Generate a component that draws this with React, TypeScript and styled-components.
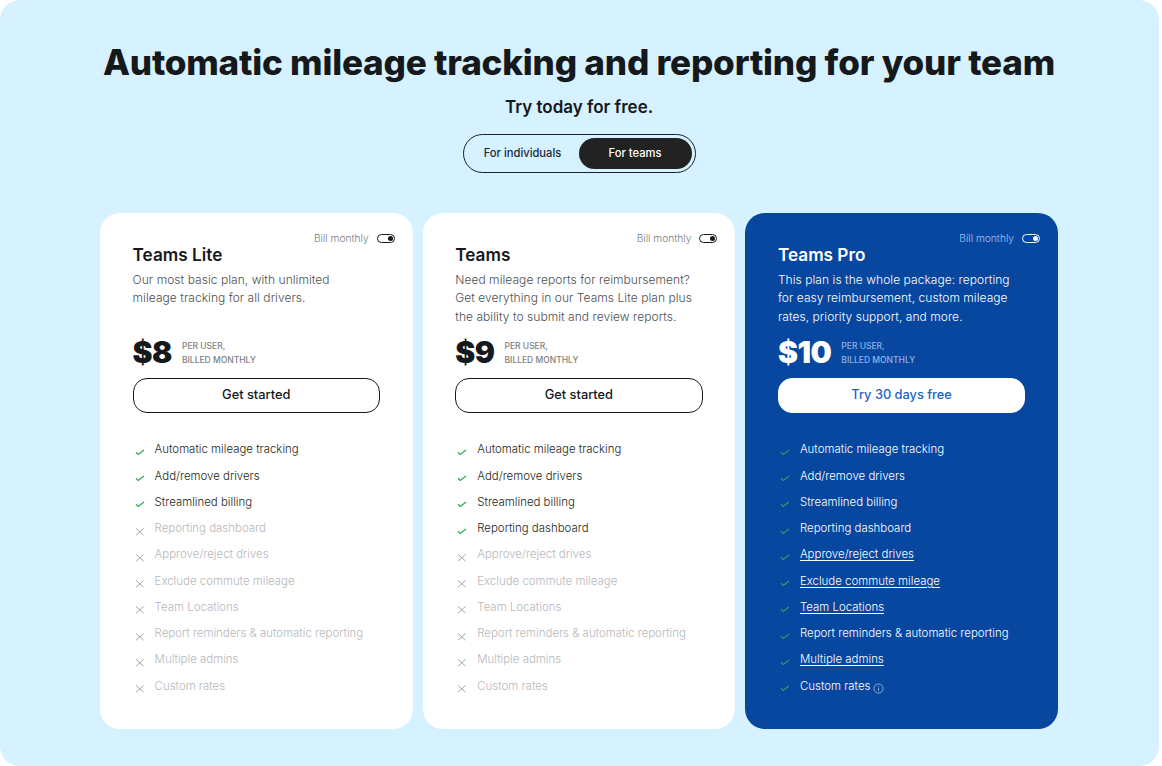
import React from 'react';
import styled, { createGlobalStyle } from 'styled-components';

const features = [
  'Automatic mileage tracking',
  'Add/remove drivers',
  'Streamlined billing',
  'Reporting dashboard',
  'Approve/reject drives',
  'Exclude commute mileage',
  'Team Locations',
  'Report reminders & automatic reporting',
  'Multiple admins',
  'Custom rates',
];

const linked = ['Approve/reject drives', 'Exclude commute mileage', 'Team Locations', 'Multiple admins'];

const plans = [
  {
    name: 'Teams Lite',
    description: 'Our most basic plan, with unlimited mileage tracking for all drivers.',
    price: '$8',
    cta: 'Get started',
    included: 3,
    pro: false,
  },
  {
    name: 'Teams',
    description: 'Need mileage reports for reimbursement? Get everything in our Teams Lite plan plus the ability to submit and review reports.',
    price: '$9',
    cta: 'Get started',
    included: 4,
    pro: false,
  },
  {
    name: 'Teams Pro',
    description: 'This plan is the whole package: reporting for easy reimbursement, custom mileage rates, priority support, and more.',
    price: '$10',
    cta: 'Try 30 days free',
    included: 10,
    pro: true,
  },
];

const App: React.FC = () => {
  return (
    <>
      <GlobalStyle />
      <Panel>
        <Heading>Automatic mileage tracking and reporting for your team</Heading>
        <Subheading>Try today for free.</Subheading>
        <Switcher>
          <SwitchOption>For individuals</SwitchOption>
          <SwitchOption $active>For teams</SwitchOption>
        </Switcher>
        <Cards>
          {plans.map((plan) => (
            <Card key={plan.name} $pro={plan.pro}>
              <BillRow $pro={plan.pro}>
                Bill monthly
                <Toggle $pro={plan.pro} />
              </BillRow>
              <PlanName>{plan.name}</PlanName>
              <Description $pro={plan.pro}>{plan.description}</Description>
              <PriceRow>
                <Price>{plan.price}</Price>
                <PriceNote $pro={plan.pro}>
                  Per user,
                  <br />
                  billed monthly
                </PriceNote>
              </PriceRow>
              <Cta $pro={plan.pro}>{plan.cta}</Cta>
              <FeatureList>
                {features.map((feature, i) => {
                  const on = i < plan.included;
                  return (
                    <Feature key={feature} $on={on} $pro={plan.pro}>
                      {on ? <CheckIcon $pro={plan.pro} /> : <CrossIcon />}
                      <FeatureText $link={plan.pro && linked.includes(feature)}>{feature}</FeatureText>
                      {plan.pro && feature === 'Custom rates' && <InfoIcon />}
                    </Feature>
                  );
                })}
              </FeatureList>
            </Card>
          ))}
        </Cards>
      </Panel>
    </>
  );
};

const CheckIcon: React.FC<{ $pro: boolean }> = ({ $pro }) => (
  <Mark viewBox="0 0 12 12" fill="none" stroke={$pro ? '#2f9e62' : '#27a75c'} strokeWidth="1.2">
    <path d="M3 7.3 5.2 9.4 11 5" />
  </Mark>
);

const CrossIcon: React.FC = () => (
  <Mark viewBox="0 0 12 12" fill="none" stroke="#a3a7aa" strokeWidth="1">
    <path d="M3 4.4 10.6 11.2M10.6 4.4 3 11.2" />
  </Mark>
);

const InfoIcon: React.FC = () => (
  <Info viewBox="0 0 12 12" fill="none" stroke="#b4d0f2" strokeWidth="0.8">
    <circle cx="6" cy="6" r="5" />
    <path d="M6 5.2V9M6 3.2V4.2" />
  </Info>
);

const GlobalStyle = createGlobalStyle`
  html, body {
    margin: 0;
    padding: 0;
    background: #fff;
  }
  body {
    font-family: Inter, "Liberation Sans", sans-serif;
    color: #16191c;
  }
`;

const Panel = styled.div`
  box-sizing: border-box;
  width: 1159px;
  height: 766px;
  padding: 40px 1px 0 0;
  background: #d6f1ff;
  border-radius: 20px;
  display: flex;
  flex-direction: column;
  align-items: center;
`;

const Heading = styled.h1`
  margin: 0;
  font-size: 35.1px;
  line-height: 44px;
  font-weight: 800;
  letter-spacing: -0.2px;
  white-space: nowrap;
  color: #16191c;
`;

const Subheading = styled.p`
  margin: 11px 0 0;
  font-size: 17px;
  line-height: 24px;
  font-weight: 600;
`;

const Switcher = styled.div`
  box-sizing: border-box;
  width: 233px;
  height: 39px;
  margin-top: 15px;
  padding: 3px;
  border: 1px solid #16232e;
  border-radius: 20px;
  display: grid;
  grid-template-columns: 112px 1fr;
`;

const SwitchOption = styled.div<{ $active?: boolean }>`
  display: flex;
  align-items: center;
  justify-content: center;
  padding-bottom: 2px;
  border-radius: 16px;
  font-size: 11.2px;
  font-weight: 500;
  color: ${(props) => (props.$active ? '#fff' : '#1d2a3a')};
  background: ${(props) => (props.$active ? '#222' : 'transparent')};
`;

const Cards = styled.div`
  width: 958px;
  margin-top: 40px;
  display: grid;
  grid-template-columns: repeat(3, 1fr);
  gap: 10px;
`;

const Card = styled.section<{ $pro: boolean }>`
  box-sizing: border-box;
  height: 516px;
  padding: 18px 18px 0 32.6px;
  border-radius: 20px;
  background: ${(props) => (props.$pro ? '#07479f' : '#fff')};
  color: ${(props) => (props.$pro ? '#fff' : '#16191c')};
`;

const BillRow = styled.div<{ $pro: boolean }>`
  height: 14px;
  display: flex;
  align-items: center;
  justify-content: flex-end;
  gap: 8px;
  font-size: 10.2px;
  font-weight: 300;
  color: ${(props) => (props.$pro ? '#a5c4ee' : '#77797c')};
`;

const Toggle = styled.span<{ $pro: boolean }>`
  box-sizing: border-box;
  position: relative;
  width: 18px;
  height: 9px;
  border: 1px solid ${(props) => (props.$pro ? '#fff' : '#16191c')};
  border-radius: 5px;

  &::after {
    content: '';
    position: absolute;
    top: 1px;
    right: 1px;
    width: 5px;
    height: 5px;
    border-radius: 50%;
    background: ${(props) => (props.$pro ? '#fff' : '#16191c')};
  }
`;

const PlanName = styled.h2`
  margin: 0;
  font-size: 17.2px;
  line-height: 20px;
  font-weight: 600;
`;

const Description = styled.p<{ $pro: boolean }>`
  box-sizing: border-box;
  width: 242px;
  height: 54px;
  margin: 6px 0 0;
  font-size: 12px;
  line-height: 18.3px;
  font-weight: 300;
  letter-spacing: 0.05px;
  color: ${(props) => (props.$pro ? '#fff' : '#4c4f52')};
`;

const PriceRow = styled.div`
  height: 36px;
  margin-top: 9px;
  display: flex;
  align-items: center;
  gap: 10px;
`;

const Price = styled.span`
  padding-bottom: 1px;
  font-size: 30px;
  font-weight: 900;
  letter-spacing: -0.5px;
`;

const PriceNote = styled.span<{ $pro: boolean }>`
  margin-top: 1px;
  font-size: 8.5px;
  line-height: 14px;
  font-weight: 500;
  text-transform: uppercase;
  color: ${(props) => (props.$pro ? '#8fb4e6' : '#7d7f81')};
`;

const Cta = styled.button<{ $pro: boolean }>`
  box-sizing: border-box;
  display: block;
  width: 247.3px;
  height: 35px;
  margin-top: 8px;
  padding: 0 0 2px;
  border: 1px solid ${(props) => (props.$pro ? '#fff' : '#16191c')};
  border-radius: 14px;
  background: #fff;
  font-family: inherit;
  font-size: 12.8px;
  font-weight: 500;
  color: ${(props) => (props.$pro ? '#1d63c4' : '#16191c')};
`;

const FeatureList = styled.ul`
  list-style: none;
  margin: 23.3px 0 0;
  padding: 0;
  display: flex;
  flex-direction: column;
`;

const Feature = styled.li<{ $on: boolean; $pro: boolean }>`
  height: 26.25px;
  display: flex;
  align-items: center;
  font-size: 11.45px;
  font-weight: 300;
  color: ${(props) => {
    if (props.$pro) return '#fff';
    return props.$on ? '#1c1f22' : '#b6b8ba';
  }};
`;

const Mark = styled.svg`
  flex: none;
  width: 12px;
  height: 12px;
  margin-right: 10px;
  margin-top: 3px;
`;

const FeatureText = styled.span<{ $link?: boolean }>`
  text-decoration: ${(props) => (props.$link ? 'underline' : 'none')};
  text-underline-offset: 2px;
`;

const Info = styled.svg`
  width: 11px;
  height: 11px;
  margin-left: 3px;
  margin-top: 6px;
`;

export default App;
